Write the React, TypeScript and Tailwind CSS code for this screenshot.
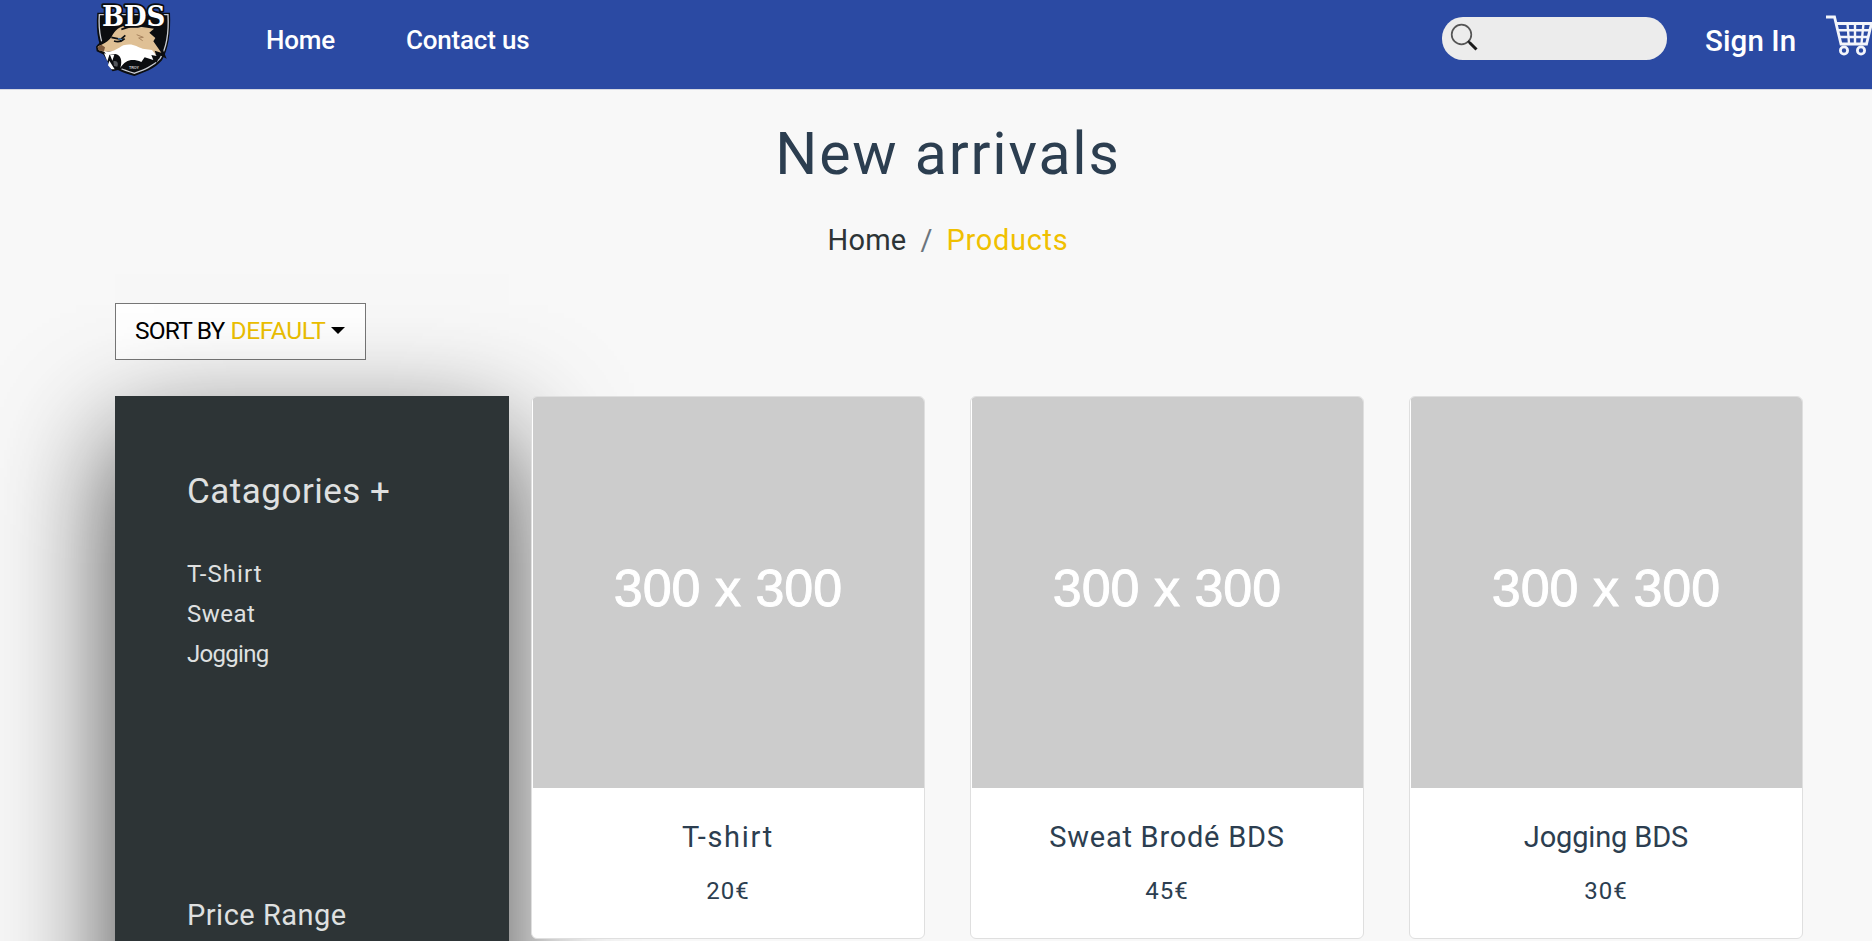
type Product = { name: string; price: string; tracking: string };

const products: Product[] = [
  { name: "T-shirt", price: "20€", tracking: "tracking-[1.7px]" },
  { name: "Sweat Brodé BDS", price: "45€", tracking: "tracking-[0.75px]" },
  { name: "Jogging BDS", price: "30€", tracking: "tracking-[-0.15px]" },
];

function Logo() {
  return (
    <svg className="block h-[90px] w-[110px]" viewBox="0 0 330 270" aria-label="BDS">
      <path d="M52 38 L270 38 C273 100 264 150 246 181 C224 208 190 218 163 228 C130 218 96 208 80 180 C58 145 46 100 52 38Z" fill="#0b0d10" />
      <path d="M58 44 L264 44 C267 100 257 148 240 176 C218 201 188 211 163 220 C134 211 104 202 87 176 C66 142 54 100 58 44Z" fill="#0b0d10" stroke="#c9ccd2" strokeWidth="4" />
      <path d="M48 140 C56 126 80 118 88 102 C100 76 128 66 160 70 L220 82 L226 106 L246 142 L260 176 L240 166 L230 188 L208 176 L186 190 C160 182 138 180 124 208 L98 214 C84 198 86 180 72 164 L50 154Z" fill="#0b0d10" />
      <path d="M54 139 C76 130 90 120 98 104 C112 80 138 72 160 77 L222 86 L208 98 L226 114 L220 124 L244 158 L224 152 L228 164 L190 152 L130 150 L74 156 L56 150Z" fill="#dfc095" />
      <path d="M72 154 C96 160 112 146 130 136 C158 128 170 140 188 146 L216 150 L230 168 L214 165 L220 180 L194 172 L184 186 C156 174 136 180 121 204 C128 182 122 164 106 162 L80 166Z" fill="#fff" />
      <path d="M52 141 L64 134 L75 142 L72 153 L57 152Z" fill="#7d593d" />
      <path d="M94 112 L122 118 L136 106 M102 123 C114 127 126 124 134 116 M124 88 L150 80" fill="none" stroke="#0b0d10" strokeWidth="5" />
      <path d="M170 104 L190 112 L176 114 L188 122" fill="none" stroke="#a98560" strokeWidth="3" />
      <path d="M114 116 L126 119" stroke="#4c84bb" strokeWidth="4" />
      <path d="M72 160 L82 184 L88 165Z M90 164 L97 182 L103 164Z M84 196 L88 182 L104 208 L94 208Z" fill="#fff" />
      <path d="M100 184 C112 180 116 190 112 200 L102 198Z" fill="#54575c" />
      <text x="162" y="206" textAnchor="middle" fontFamily="Liberation Sans" fontWeight="700" fontSize="11" fill="#d0d0d0">TROY</text>
      <text x="66" y="79" textLength="190" lengthAdjust="spacingAndGlyphs" fontFamily="DejaVu Serif" fontWeight="700" fontSize="82" fill="#fff" stroke="#0b0d10" strokeWidth="11" paintOrder="stroke" strokeLinejoin="round">BDS</text>
    </svg>
  );
}

function Header() {
  return (
    <header className="flex h-[90px] shrink-0 border-b border-[#d5d8e2] bg-[#2b4aa3] pl-20 text-white">
      <Logo />
      <nav className="ml-[76px] flex h-20 gap-[71px] text-[26px] leading-[80px] font-medium tracking-[-0.2px]">
        <a>Home</a>
        <a>Contact us</a>
      </nav>
      <label className="mt-[17px] ml-auto flex h-[43px] w-[225px] rounded-[21px] bg-[#ececec] pt-[6px] pl-[8px]">
        <svg className="h-7 w-7" viewBox="0 0 28 28" fill="none">
          <circle cx="11.5" cy="11.5" r="9.8" stroke="#555" strokeWidth="1.7" />
          <path d="m18 18 2 2" stroke="#222" strokeWidth="2" />
          <path d="m19.5 19.5 7 7" stroke="#1b1b1b" strokeWidth="3" />
        </svg>
      </label>
      <a className="ml-[38px] w-[119px] text-[29.5px] leading-[83px] font-medium tracking-[0.1px] whitespace-nowrap">Sign In</a>
      <svg className="mt-[14px] h-[42px] w-[48px] shrink-0" viewBox="0 0 48 42" fill="none" stroke="#f3f5fb" strokeWidth="2.8">
        <path d="M2 3h8.500l6.500 27h25.500l5-20.500H12.500" />
        <path d="M13.500 16.200h32M15 23h29.500M23.500 9.500l1.500 20M31 9.500v20M39.500 9.500l-2 20" strokeWidth="2.4" />
        <circle cx="20" cy="36.500" r="3.600" />
        <circle cx="37" cy="36.500" r="3.600" />
      </svg>
    </header>
  );
}

function Sidebar() {
  return (
    <aside className="h-[700px] w-[394px] shrink-0 bg-[#2d3436] pl-[72px] text-[#dfe0e0] shadow-[0_42px_110px_rgba(0,0,0,0.73)]">
      <h2 className="pt-[70px] text-[35px] leading-[52px] tracking-[0.5px]">Catagories +</h2>
      <ul className="mt-[36px] text-[24px] leading-[40px]">
        <li className="tracking-[1.1px]">T-Shirt</li>
        <li className="tracking-[0.5px]">Sweat</li>
        <li className="tracking-[-0.7px]">Jogging</li>
      </ul>
      <h3 className="mt-[221px] text-[29px] leading-[40px] tracking-[0.5px]">Price Range</h3>
    </aside>
  );
}

function ProductCard({ product }: { product: Product }) {
  return (
    <article className="flex h-[543px] w-[394px] shrink-0 flex-col items-center overflow-hidden rounded-[6px] border border-[#dfdfdf] bg-white text-[#2c3e50]">
      <div className="flex h-[391px] w-[391px] shrink-0 items-center justify-center bg-[#ccc] font-['Liberation_Sans',sans-serif] text-[52px] leading-none text-white [-webkit-text-stroke:0.9px_white]">
        <span className="-mt-[10px]">300 x 300</span>
      </div>
      <h4 className={`mt-[28px] text-[29px] leading-[42px] ${product.tracking}`}>{product.name}</h4>
      <p className="mt-[13px] text-[24px] leading-[40px] tracking-[1px]">{product.price}</p>
    </article>
  );
}

export default function App() {
  return (
    <div className="flex h-[941px] w-[1872px] flex-col overflow-hidden bg-[#f8f8f8] font-[Roboto,sans-serif]">
      <Header />
      <main className="flex flex-col">
        <h1 className="mt-[24px] ml-6 text-center text-[59px] leading-[80px] tracking-[1.8px] text-[#2c3e50]">New arrivals</h1>
        <nav className="mt-[26px] ml-6 flex justify-center text-[29px] leading-[40px]">
          <a className="tracking-[0.2px] text-[#2d3436]">Home</a>
          <span className="mx-[14px] text-[#6c757d]">/</span>
          <a className="tracking-[0.7px] text-[#f0c000]">Products</a>
        </nav>
        <button className="mt-[43px] ml-[115px] flex h-[57px] w-[251px] items-center border border-[#777] bg-white pl-[19px] text-[24.5px] whitespace-nowrap">
          <span className="tracking-[-0.8px] text-black">SORT BY</span>
          <span className="ml-[6px] tracking-[-0.4px] text-[#edc000]">DEFAULT</span>
          <span className="-mt-[2px] ml-[6px] border-x-[7px] border-t-[7px] border-x-transparent border-t-black" />
        </button>
        <div className="mt-[36px] flex items-start pl-[115px]">
          <Sidebar />
          <section className="ml-[22px] flex gap-[45px]">
            {products.map((product) => (
              <ProductCard key={product.name} product={product} />
            ))}
          </section>
        </div>
      </main>
    </div>
  );
}
